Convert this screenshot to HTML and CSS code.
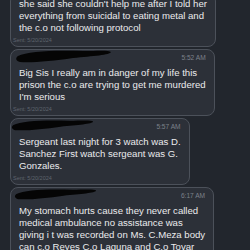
FILE: index.html
```html
<!DOCTYPE html>
<html lang="en">
<head>
    <meta charset="UTF-8">
    <meta name="viewport" content="width=device-width, initial-scale=1.0">
    <title>Messages</title>
    <link rel="stylesheet" href="styles.css">
</head>
<body>

<div class="thread">
    <div class="bubble">
        <p class="text">she said she couldn't help me after I told her<br>everything from suicidal to eating metal and<br>the c.o not following protocol</p>
        <div class="sent">Sent: 5/20/2024</div>
    </div>

    <div class="bubble">
        <div class="meta">
            <svg class="redact" width="100" height="14" viewBox="0 0 96 14"><path d="M3 7 C12 2 40 1 68 2 C82 2 94 1 96 3 C95 6 78 7 58 9 C38 12 16 14 5 13 C1 12 0 9 3 7 Z"/></svg>
            <span class="time">5:52 AM</span>
        </div>
        <p class="text">Big Sis I really am in danger of my life this<br>prison the c.o are trying to get me murdered<br>I'm serious</p>
        <div class="sent">Sent: 5/20/2024</div>
    </div>

    <div class="bubble">
        <div class="meta">
            <svg class="redact wide" width="94" height="12" viewBox="0 0 96 14"><path d="M3 7 C12 2 40 1 68 2 C82 2 94 1 96 3 C95 6 78 7 58 9 C38 12 16 14 5 13 C1 12 0 9 3 7 Z"/></svg>
            <span class="time">5:57 AM</span>
        </div>
        <p class="text">Sergeant last night for 3 watch was D.<br>Sanchez First watch sergeant was G.<br>Gonzales.</p>
        <div class="sent">Sent: 5/20/2024</div>
    </div>

    <div class="bubble">
        <div class="meta">
            <svg class="redact" width="84" height="12" viewBox="0 0 96 14"><path d="M3 7 C12 2 40 1 68 2 C82 2 94 1 96 3 C95 6 78 7 58 9 C38 12 16 14 5 13 C1 12 0 9 3 7 Z"/></svg>
            <span class="time">6:17 AM</span>
        </div>
        <p class="text">My stomach hurts cause they never called<br>medical ambulance no assistance was<br>giving i t was recorded on Ms. C.Meza body<br>can c.o Reyes C.o Laguna and C.o Tovar</p>
        <div class="sent">Sent: 5/20/2024</div>
    </div>
</div>

</body>
</html>
```

FILE: styles.css
```css
body {
    margin: 0;
    background-color: #22262d;
    font-family: "Liberation Sans", Arial, sans-serif;
    overflow: hidden;
}
.thread {
    display: flex;
    flex-direction: column;
    align-items: flex-start;
    gap: 2px;
    padding-left: 10px;
    margin-top: -7px;
}
.bubble {
    width: fit-content;
    background-color: #2c3038;
    border: 1px solid #4c515a;
    border-radius: 8px;
}
.meta {
    display: flex;
    justify-content: space-between;
    align-items: center;
    height: 11px;
    margin-top: 2px;
    padding-right: 8px;
}
.redact {
    fill: #050505;
    margin-left: 2px;
    margin-top: -3px;
}
.redact.wide {
    margin-left: -6px;
}
.time {
    font-size: 6.6px;
    color: #7c818a;
}
.text {
    margin: 4px 0 0 0;
    padding: 0 8px;
    font-size: 9.6px;
    line-height: 12px;
    color: #ebebed;
    white-space: nowrap;
}
.sent {
    margin-top: 2px;
    padding: 0 2px 2px 2px;
    font-size: 5.5px;
    line-height: 8px;
    color: #5f656e;
}
```
